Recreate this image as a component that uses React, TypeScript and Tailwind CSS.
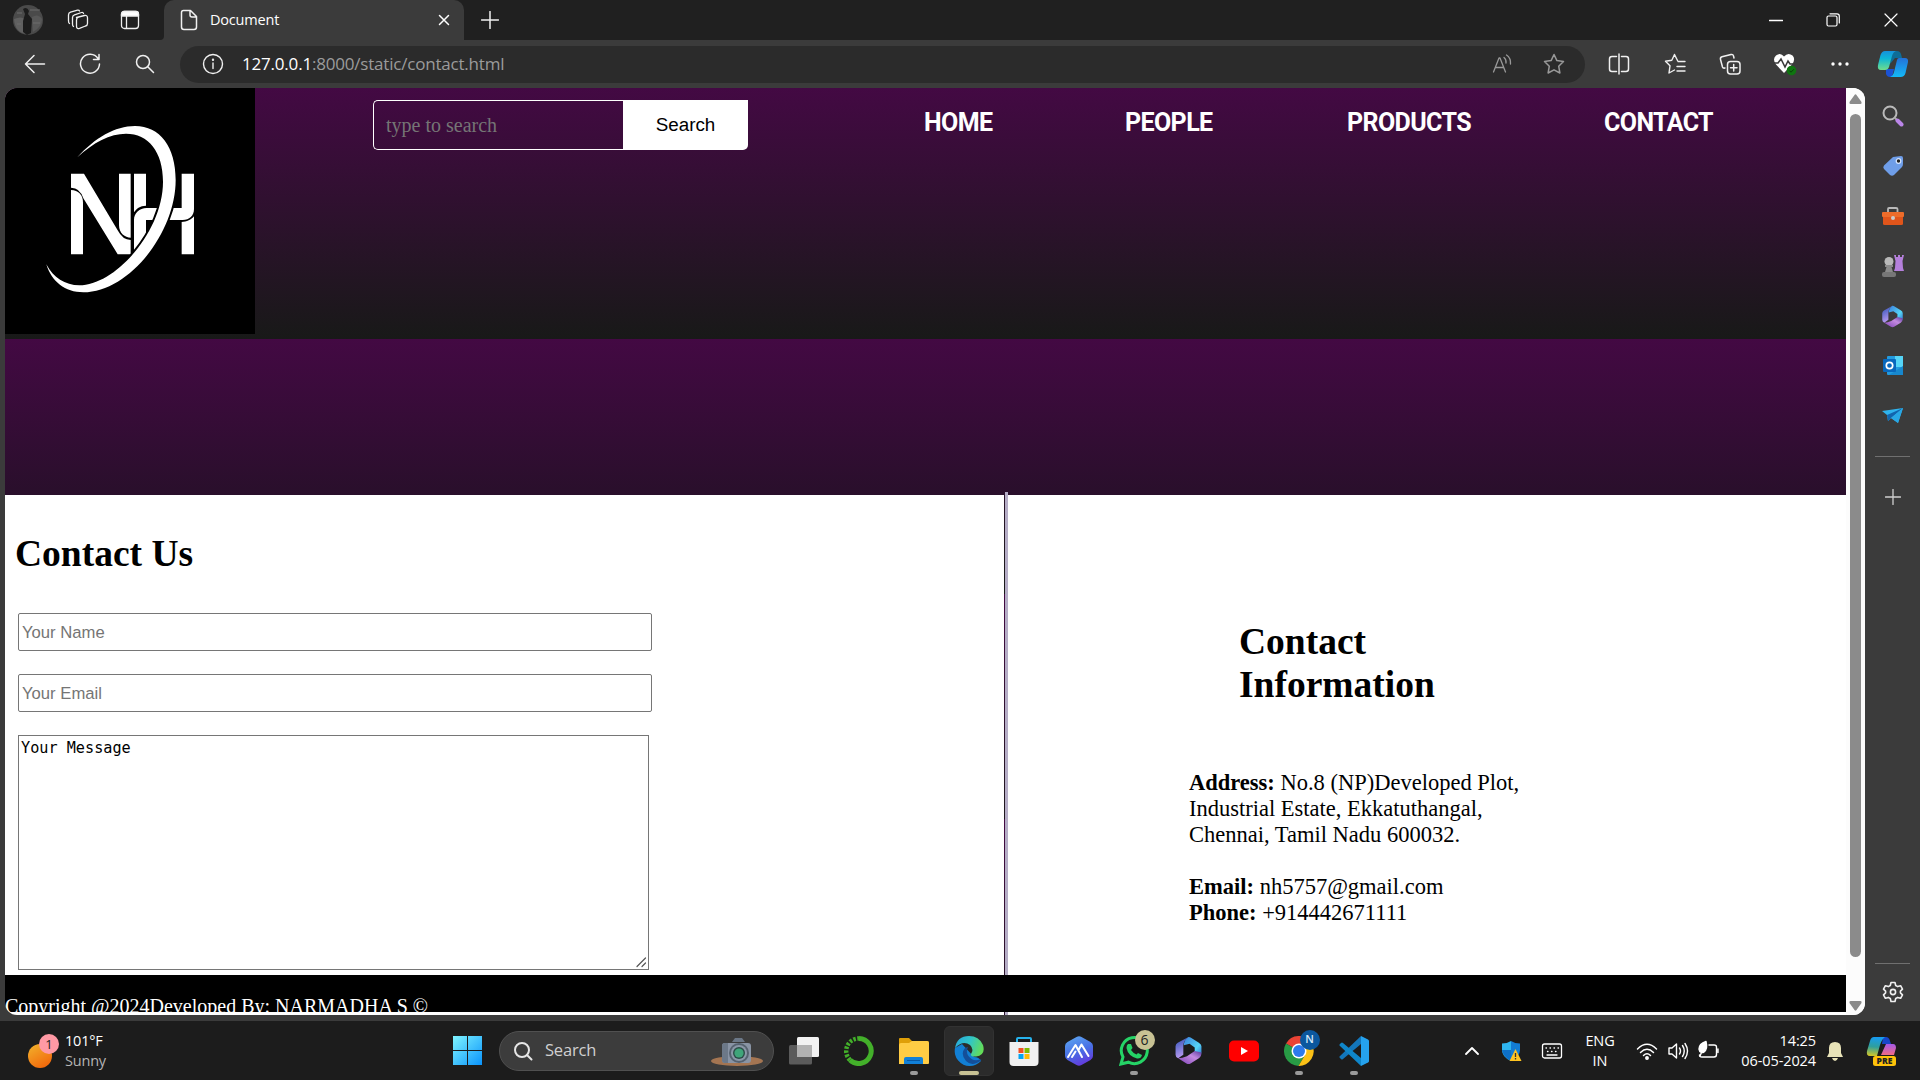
import type { ReactNode } from 'react';

const UI = "font-['Open_Sans','Noto_Sans',sans-serif]";
const SERIF = "font-['Liberation_Serif',serif]";

function Slot({ w, children, className = '' }: { w: string; children: ReactNode; className?: string }) {
  return <div className={`flex shrink-0 items-center justify-center ${w} ${className}`}>{children}</div>;
}

function Line({ size = 22, color = '#f0f0f0', sw = 1.3, children }: { size?: number; color?: string; sw?: number; children: ReactNode }) {
  return (
    <svg width={size} height={size} viewBox={`0 0 ${size} ${size}`} fill="none" stroke={color} strokeWidth={sw} strokeLinecap="round" strokeLinejoin="round" className="shrink-0">
      {children}
    </svg>
  );
}

function Microsoft365({ size, id }: { size: number; id: string }) {
  return (
    <svg width={size} height={size} viewBox="0 0 28 28" className="shrink-0">
      <defs>
        <linearGradient id={id + 'a'} x1="0" y1="0" x2="0.3" y2="1"><stop stopColor="#2b4fb5" /><stop offset="1" stopColor="#b79af0" /></linearGradient>
        <linearGradient id={id + 'b'} x1="0" y1="0" x2="1" y2="1"><stop stopColor="#3a7fdd" /><stop offset=".6" stopColor="#55d6f7" /><stop offset="1" stopColor="#2b58c5" /></linearGradient>
        <linearGradient id={id + 'c'} x1="0" y1="1" x2="1" y2="0"><stop stopColor="#7c3fb5" /><stop offset=".6" stopColor="#c48be0" /><stop offset="1" stopColor="#55389c" /></linearGradient>
      </defs>
      <path d="M14 1 3.6 6.6Q1.5 8 1.5 10V18Q1.5 20.500 4 21.500L9 18V9Q9 5 14 1Z" fill={`url(#${id}a)`} />
      <path d="M14 1Q9.500 4 9.500 9L15 7.500 20 11V16.500Q20 20 17.500 23L24 20Q26.500 18.500 26.500 16V10Q26.500 8 24 6.500L16 1.500Q15 .8 14 1Z" fill={`url(#${id}b)`} />
      <path d="M4 21.500 12 26.500Q14 27.500 16 26.500L24 21.500Q26.500 20 26.500 16L20 14.500 12.500 19.500Q8 21.500 4 21.500Z" fill={`url(#${id}c)`} />
    </svg>
  );
}

function Copilot() {
  return (
    <svg width="32" height="30" viewBox="0 0 32 30">
      <defs>
        <linearGradient id="cpa" x1="0" y1="0" x2="0" y2="1"><stop stopColor="#1691dc" /><stop offset=".4" stopColor="#0db6d6" /><stop offset="1" stopColor="#70dd8c" /></linearGradient>
        <linearGradient id="cpb" x1="0" y1="0" x2="0" y2="1"><stop stopColor="#2471d8" /><stop offset="1" stopColor="#13baf8" /></linearGradient>
      </defs>
      <path d="M15 2H20Q23 2 24 5L25 9H18L13 15Z" fill="#0e6d98" />
      <path d="M9 20H17L15 28H13Q10 28 9 25Z" fill="#1b52d4" />
      <path d="M8 2H19Q16 3 15 7L12 18Q11 21 8 21H4Q0 21 1 16L3.500 6Q5 2 8 2Z" fill="url(#cpa)" />
      <path d="M22 9H28Q31.500 9 31 13L28.500 24Q27.500 28 23.500 28H13Q16 27 17 23L20 11Q20.500 9 22 9Z" fill="url(#cpb)" />
    </svg>
  );
}

function TitleBar() {
  return (
    <header className="flex h-10 items-end bg-[#202020]">
      <Slot w="w-[55px]" className="h-10">
        <svg width="30" height="30" viewBox="0 0 30 30">
          <circle cx="15" cy="15" r="15" fill="#4a4a4a" />
          <path d="M1 14Q8 11 12 14L14 29Q2 28 1 14Z" fill="#606060" /><path d="M19 12Q25 8 29 14 29 22 20 27Z" fill="#585858" />
          <path d="M10 4Q14 1 16 6L15 9 19 14 18 28 14 30 10 27 10 16 12 9Z" fill="#1c1c1c" />
          <path d="M17 5H27M4 8H9M4 19H8M20 18H27" stroke="#6c6c6c" strokeWidth="1" />
        </svg>
      </Slot>
      <Slot w="w-[45px]" className="h-10">
        <Line size={22}>
          <path d="M9.500 8.500 17.500 6.500Q20.500 6 20.500 9V14.500Q20.500 16.500 18.500 17L12.500 19.300Q9.500 20.300 9.500 17V11Q9.500 9 11.500 8.200" />
          <path d="M6.500 17.500Q5.500 17 5.500 15V8.500Q5.500 6.500 7.500 5.800L14.500 3.500Q16 3 16.500 4.500M2.500 14.500Q1.500 14 1.500 12V6Q1.500 4 3.500 3.200L10.500 1.200Q12 .8 12.500 2" />
        </Line>
      </Slot>
      <Slot w="w-[60px]" className="h-10">
        <Line size={20}><rect x="1.500" y="1.500" width="17" height="17" rx="3" /><path d="M1.500 6V4Q1.500 1.500 4 1.500H16Q18.500 1.500 18.500 4V6Z" fill="#fff" /><path d="M6.500 6V18" /></Line>
      </Slot>
      <div className="flex h-10 w-[4px] items-end bg-[#3b3b3b]"><div className="h-10 w-[4px] rounded-br-lg bg-[#202020]" /></div>
      <div className="flex h-10 w-[300px] items-center rounded-t-[10px] bg-[#3b3b3b] pb-[1px]">
        <Slot w="w-[46px]" className="pl-1">
          <Line size={22} sw={1.5}><path d="M5.500 1.500H12.500L18.500 7.500V18Q18.500 20.500 16 20.500H6Q3.500 20.500 3.500 18V3.500Q3.500 1.500 5.500 1.500ZM12 2V6Q12 8 14 8H18" /></Line>
        </Slot>
        <span className={`grow text-[14.5px] tracking-[-0.2px] text-white ${UI}`}>Document</span>
        <Slot w="w-[40px]"><Line size={12} color="#fff" sw={1.5}><path d="M1.500 1.500 10.500 10.500M10.500 1.500 1.500 10.500" /></Line></Slot>
      </div>
      <Slot w="w-[52px]" className="h-10"><Line size={18} sw={1.5}><path d="M9 .5V17.500M.5 9H17.500" /></Line></Slot>
      <div className="grow" />
      <Slot w="w-[57px]" className="h-10"><Line size={14} color="#fff"><path d="M.5 7.500H13.500" /></Line></Slot>
      <Slot w="w-[58px]" className="h-10"><Line size={14} color="#fff" sw={1.2}><rect x="1" y="3" width="10" height="10" rx="1.500" /><path d="M4 .8H11Q13.300 .8 13.300 3V10" /></Line></Slot>
      <Slot w="w-[58px]" className="h-10"><Line size={14} color="#fff" sw={1.2}><path d="M1 1 13 13M13 1 1 13" /></Line></Slot>
    </header>
  );
}

function Toolbar() {
  return (
    <div className="flex h-12 items-center bg-[#3b3b3b] pt-[0px]">
      <Slot w="w-[70px]"><Line size={22} sw={1.5}><path d="M20.500 11H1.500M10 2.500 1.500 11 10 19.500" /></Line></Slot>
      <Slot w="w-[40px]"><Line size={22} sw={1.5}><path d="M19 5.500A9.500 9.500 0 1 0 20.500 11M20 1.500V6.500H14.500" /></Line></Slot>
      <Slot w="w-[70px]"><Line size={20} sw={1.5}><circle cx="8" cy="8" r="6.500" /><path d="M13 13 18.500 18.500" /></Line></Slot>
      <div className="flex h-[37px] w-[1405px] items-center rounded-full bg-[#2b2b2b]">
        <Slot w="w-[62px]" className="pl-[3px]"><Line size={22} sw={1.4}><circle cx="11" cy="11" r="9.500" /><path d="M11 10V15.500" /><circle cx="11" cy="6.800" r=".5" /></Line></Slot>
        <div className={`grow text-[17px] tracking-[-0.2px] text-[#9b9b9b] ${UI}`}><span className="text-white">127.0.0.1</span>:8000/static/contact.html</div>
        <Slot w="w-[52px]">
          <Line size={20} color="#999"><path d="M1.500 18 7 4H8L13.500 18M3.500 13.500H11.500M12 3.500Q14.500 5.500 14 9M14.500 1Q19 4 18.500 10" /></Line>
        </Slot>
        <Slot w="w-[57px]" className="pr-[6px]"><Line size={22} color="#999" sw={1.5}><path d="M11 1.500 13.900 7.600 20.500 8.500 15.700 13.200 16.900 20 11 16.800 5.100 20 6.300 13.200 1.500 8.500 8.100 7.600Z" /></Line></Slot>
      </div>
      <Slot w="w-[62px]" className="pl-[6px]"><Line size={22} sw={1.5}><path d="M8.500 3.500H4Q1.500 3.500 1.500 6V16Q1.500 18.500 4 18.500H8.500M13.500 3.500H18Q20.500 3.500 20.500 6V16Q20.500 18.500 18 18.500H13.500M11 1V21" /></Line></Slot>
      <Slot w="w-[56px]"><Line size={22} sw={1.4}><path d="M13.500 7.500 10.500 1.500 7.800 7.300 1.500 8.200 6 12.800 5 20 10.500 17M14 8.500H21M13 13.500H21M13 18H21" /></Line></Slot>
      <Slot w="w-[54px]"><Line size={22} sw={1.5}><rect x="8.500" y="8.500" width="12.500" height="12.500" rx="3" /><path d="M14.700 11.500V18M11.500 14.700H18M15 5 14.500 3Q14 1 12 1.500L3 3.800Q1 4.500 1.500 6.500L3.500 14Q4 15.500 6 15" /></Line></Slot>
      <Slot w="w-[56px]">
        <svg width="24" height="24" viewBox="0 0 24 24"><path d="M11 21 3 12.500Q-1 7 3 3.500 7.500 0 11 4.500 15 0 19.500 3.500 23 7 19 12.500Z" fill="#fff" /><path d="M0 11H5L8 7 12 15 15 9 17 12H22" stroke="#3b3b3b" strokeWidth="1.600" fill="none" /><circle cx="18.500" cy="18.500" r="4.800" fill="#0f7510" /><path d="m16.500 18.700 1.500 1.500 3-3" stroke="#0a3d0a" fill="none" /></svg>
      </Slot>
      <Slot w="w-[54px]"><svg width="18" height="4" fill="#fff"><circle cx="2" cy="2" r="1.700" /><circle cx="9" cy="2" r="1.700" /><circle cx="16" cy="2" r="1.700" /></svg></Slot>
      <Slot w="w-[51px]"><Copilot /></Slot>
    </div>
  );
}

function BrandLogo() {
  const ring = 'M232 217C285 158 345 123 405 123C480 123 527 185 527 285C527 445 385 622 250 622C195 622 155 590 139 538C160 578 195 601 238 601C345 601 489 440 489 290C489 200 445 146 378 146C330 146 280 172 232 217Z';
  return (
    <svg width="250" height="246" viewBox="15 9 750 738" className="shrink-0 bg-black" fill="#fff">
      <path d="M213 266H252L353 436Q368 465 392 465V508H353L250 340Q240 308 213 308Z" />
      <path d="M213 315C235 315 249 330 249 352V508H213Z" />
      <path d="M357 266H392V458C375 458 357 445 357 420Z" />
      <path d="M402 266H438V362C420 362 408 372 402 382Z" />
      <path d="M402 500V405C402 385 418 369 440 369H475L462 405H438V470Z" />
      <path d="M518 369H545V266H582V372C582 392 568 405 548 405H500Z" />
      <path d="M545 411C560 411 574 404 582 394V508H545Z" />
      <path d={ring} stroke="#000" strokeWidth="12" />
      <path d={ring} />
    </svg>
  );
}

function WebPage() {
  return (
    <main className="flex h-[927px] w-[1860px] overflow-hidden rounded-xl bg-white">
      <div className="flex w-[1841px] flex-col">
        <div className="flex h-[251px] shrink-0 items-start bg-[linear-gradient(180deg,#430943_0%,#181918_100%)]">
          <BrandLogo />
          <div className="ml-[118px] mt-3 flex h-[50px] w-[375px]">
            <div className={`flex w-[250px] items-center rounded-l-[5px] border border-r-0 border-white pl-3 text-[20px] text-[#757575] ${SERIF}`}>type to search</div>
            <div className="flex w-[125px] items-center justify-center rounded-br-[5px] bg-white font-['Liberation_Sans',sans-serif] text-[18.8px] text-black">Search</div>
          </div>
          <nav className="ml-[176px] mt-[20px] flex gap-[132px] font-['Roboto',sans-serif] text-[25px] leading-[30px] font-bold text-white">
            <a className="w-[69px] tracking-[-0.6px]">HOME</a>
            <a className="w-[90px] tracking-[-0.6px]">PEOPLE</a>
            <a className="w-[125px] tracking-[-0.6px]">PRODUCTS</a>
            <a className="w-[104px] tracking-[-0.6px]">CONTACT</a>
          </nav>
        </div>
        <div className="h-[156px] shrink-0 bg-[linear-gradient(180deg,#430943_0%,#290f2b_100%)]" />
        <div className="flex h-[480px] shrink-0">
          <section className="w-[999px] pl-[10px]">
            <h1 className={`pt-[37px] text-[37.5px] leading-[43px] font-bold text-black ${SERIF}`}>Contact Us</h1>
            <div className="mt-[38px] ml-[3px] flex flex-col gap-[23px] font-['Liberation_Sans',sans-serif] text-[16.67px] text-[#757575]">
              <div className="flex h-[38px] w-[634px] items-center rounded-[2px] border border-[#767676] pl-[3px]">Your Name</div>
              <div className="flex h-[38px] w-[634px] items-center rounded-[2px] border border-[#767676] pl-[3px]">Your Email</div>
              <div className="flex h-[235px] w-[631px] items-end justify-between border border-[#767676] pl-[2px] font-['DejaVu_Sans_Mono',monospace] text-[15.2px] leading-[20px] text-black">
                <span className="self-start pt-[2px]">Your Message</span>
                <Line size={13} color="#555" sw={1.2}><path d="M2 10.500 10.500 2M7 10.500 10.500 7" /></Line>
              </div>
            </div>
          </section>
          <div className="-mt-[3px] flex w-[4px]">
            <div className="mt-[3px] w-px bg-[repeating-linear-gradient(180deg,#430943_0px,#181918_255px)] bg-[position:0_-156px]" />
            <div className="w-[3px] bg-[#b5adc6]" />
          </div>
          <section className={`text-black ${SERIF}`}>
            <h1 className="ml-[231px] mt-[125px] text-[37.5px] leading-[43px] font-bold">Contact<br />Information</h1>
            <p className="mt-[64px] ml-[181px] text-[22.5px] leading-[26px] whitespace-nowrap">
              <b>Address:</b> No.8 (NP)Developed Plot,<br />Industrial Estate, Ekkatuthangal,<br />Chennai, Tamil Nadu 600032.<br /><br />
              <b>Email:</b> nh5757@gmail.com<br /><b>Phone:</b> +914442671111
            </p>
          </section>
        </div>
        <footer className={`h-[37px] shrink-0 overflow-hidden bg-black pt-[20px] text-[20px] leading-[23px] whitespace-nowrap text-white ${SERIF}`}>Copyright @2024Developed By: NARMADHA S ©</footer>
        <div className="flex h-[3px] shrink-0 pl-[999px]"><div className="w-px bg-[#2a122c]" /><div className="w-[3px] bg-[#b5adc6]" /></div>
      </div>
      <div className="flex w-[19px] flex-col items-center bg-[#fcfcfc] pr-px">
        <svg width="13" height="26" viewBox="0 0 13 26"><path d="M5.500 7Q6.500 5.500 7.500 7L12.500 14Q13 16 11.500 16H1.500Q0 16 .5 14Z" fill="#8b8b8b" /></svg>
        <div className="h-[843px] w-[11px] rounded-full bg-[#8b8b8b]" />
        <svg width="13" height="58" viewBox="0 0 13 58"><path d="M5.500 53Q6.500 54.500 7.500 53L12.500 46Q13 44 11.500 44H1.500Q0 44 .5 46Z" fill="#8b8b8b" /></svg>
      </div>
    </main>
  );
}

function Sidebar() {
  return (
    <aside className="flex w-[55px] flex-col items-center">
      <div className="flex h-[353px] flex-col pt-[3px]">
        <Slot w="w-[24px]" className="h-[50px]"><svg width="22" height="22" viewBox="0 0 22 22" fill="none"><circle cx="8" cy="8" r="6.500" stroke="#bababa" strokeWidth="2" /><path d="m12.500 12.500 2 2" stroke="#aaa" strokeWidth="2" /><path d="m15.500 15.500 4 4" stroke="#bb86e9" strokeWidth="4" strokeLinecap="round" /></svg></Slot>
        <Slot w="w-[24px]" className="h-[50px]"><svg width="22" height="22" viewBox="0 0 22 22"><path d="M11 2 19 1Q21 1 21 3V9Q21 11 19.500 12.500L12 20Q10 21.500 8 20L2 14Q.5 12 2 10.500Z" fill="#6f9ee9" /><circle cx="16.500" cy="6" r="2.300" fill="#222" stroke="#d7e6ff" strokeWidth="1.200" /></svg></Slot>
        <Slot w="w-[24px]" className="h-[50px]"><svg width="24" height="20" viewBox="0 0 24 20"><path d="M7 6V3Q7 2 8 2H15Q16.500 2 16.500 3V6" stroke="#b9b9b9" strokeWidth="1.800" fill="none" /><rect x="2" y="6" width="20" height="13" rx="1.500" fill="#e0551b" /><rect x="1" y="6" width="22" height="5" rx="1" fill="#ed6c2a" /><circle cx="12" cy="12" r="2" fill="#ccc" /></svg></Slot>
        <Slot w="w-[24px]" className="h-[50px]">
          <svg width="24" height="24" viewBox="0 0 24 24"><path d="M13 1H15V3H17V1H19V3H21V1H23L21.500 7 22 14 23 17H13L14 14 14.500 7Z" fill="#b580dc" /><circle cx="8" cy="7.500" r="4.500" fill="#b9b9b9" /><path d="M4 11H12V13H10.500L12 18H4L5.500 13H4Z" fill="#8b8b8b" /><rect x="1" y="18" width="14" height="5" rx="2" fill="#777" /></svg>
        </Slot>
        <Slot w="w-[24px]" className="h-[50px]"><Microsoft365 size={23} id="sm" /></Slot>
        <Slot w="w-[24px]" className="h-[50px]">
          <svg width="22" height="22" viewBox="0 0 22 22"><rect x="5" y="1" width="16" height="19" rx="1" fill="#239bdf" /><path d="M13 1H21V12H13Z" fill="#55d5f7" /><path d="M7 20 21 11V20Z" fill="#1788ce" /><rect x="1" y="4" width="13" height="13" rx="1" fill="#0868bd" /><circle cx="7.500" cy="10.500" r="3.200" fill="none" stroke="#fff" strokeWidth="1.700" /></svg>
        </Slot>
        <Slot w="w-[24px]" className="h-[50px]"><svg width="24" height="20" viewBox="0 0 24 20"><path d="M1 5 22 2 17 17 10 12 7 15 6 9Z" fill="#2fb3ed" /><path d="M6 9 22 2 10 12 7 15Z" fill="#1264ad" /><path d="M10 12 22 2 17 17Z" fill="#28a7e5" /></svg></Slot>
      </div>
      <div className="mt-[15px] h-px w-[35px] bg-[#707070]" />
      <div className="mt-[32px]"><Line size={16} color="#d0d0d0"><path d="M8 .5V15.500M.5 8H15.500" /></Line></div>
      <div className="grow" />
      <div className="h-px w-[35px] bg-[#707070]" />
      <div className="mt-[17px] mb-[18px]">
        <Line size={22} sw={1.600}><path d="M9 1.500H13L13.700 4.500 15.700 5.600 18.600 4.700 20.500 8.200 18.400 10.200V11.800L20.500 13.800 18.600 17.300 15.700 16.400 13.700 17.500 13 20.500H9L8.300 17.500 6.300 16.400 3.400 17.300 1.500 13.800 3.600 11.800V10.200L1.500 8.200 3.400 4.700 6.300 5.600 8.300 4.500Z" /><circle cx="11" cy="11" r="2.600" /></Line>
      </div>
    </aside>
  );
}

function AppTile({ children, mark }: { children: ReactNode; mark?: 'dot' | 'active' }) {
  return (
    <div className="flex w-[55px] shrink-0 flex-col items-center">
      <div className={mark === 'active' ? 'flex h-[50px] w-[50px] flex-col items-center rounded-md border border-[#323232] bg-[#2b2b2b]' : 'flex h-[50px] w-[50px] flex-col items-center border border-transparent'}>
        <div className="flex h-[43px] shrink-0 items-center justify-center pt-[5px]">{children}</div>
        {mark && <div className={mark === 'active' ? 'mt-[1px] h-1 w-5 shrink-0 rounded-full bg-[#c8c294]' : 'mt-[1px] h-1 w-2 shrink-0 rounded-full bg-[#9a9a9a]'} />}
      </div>
    </div>
  );
}

function Taskbar() {
  return (
    <div className={`flex h-[59px] items-center bg-[#1c1c1c] text-white ${UI}`}>
      <div className="flex w-[453px] items-center pl-[27px]">
        <svg width="33" height="36" viewBox="0 0 33 36">
          <defs><linearGradient id="sun" x1="0" y1="0" x2=".6" y2="1"><stop stopColor="#f2b42d" /><stop offset="1" stopColor="#f26a0c" /></linearGradient></defs>
          <circle cx="13" cy="23" r="12" fill="url(#sun)" /><circle cx="22" cy="11" r="10" fill="#ff99a4" />
          <text x="22" y="16" textAnchor="middle" fontSize="13" fill="#222" fontFamily="Open Sans">1</text>
        </svg>
        <div className="ml-[5px] text-[14.5px] leading-[20px] tracking-[-0.2px]"><div>101°F</div><div className="text-[#b5b5b5]">Sunny</div></div>
      </div>
      <svg width="29" height="29" viewBox="0 0 29 29">
        <defs><linearGradient id="win" x1="0" y1="0" x2="1" y2="1"><stop stopColor="#7ff5ff" /><stop offset="1" stopColor="#0a93fb" /></linearGradient></defs>
        <path d="M0 0H14V14H0ZM15 0H29V14H15ZM0 15H14V29H0ZM15 15H29V29H15Z" fill="url(#win)" />
      </svg>
      <div className="ml-[17px] flex h-10 w-[275px] items-center rounded-full border border-[#505050] bg-[#3c3c3c] pl-[13px]">
        <Line size={20} color="#e6e6e6" sw={2}><circle cx="9" cy="9" r="7" /><path d="M14 14 18.500 18.500" /></Line>
        <span className="ml-[12px] grow text-[16.5px] tracking-[-0.2px] text-[#d0d0d0]">Search</span>
        <svg width="54" height="32" viewBox="0 0 54 32" className="mr-[9px]">
          <ellipse cx="27" cy="26" rx="26" ry="5" fill="#a47552" />
          <path d="M22 7 25 3H32L35 7Z" fill="#6b7787" /><rect x="12" y="8" width="29" height="20" rx="3" fill="#8994a5" /><path d="M12 11Q12 8 15 8H18V28H15Q12 28 12 25Z" fill="#6c7888" />
          <circle cx="29" cy="18" r="10" fill="#566270" /><circle cx="29" cy="18" r="8" fill="#8b98a8" /><circle cx="29" cy="18" r="6" fill="#2c4c48" /><circle cx="29" cy="18" r="4.600" fill="#3fa57a" />
        </svg>
      </div>
      <div className="ml-[2px] flex">
        <AppTile><svg width="30" height="28" viewBox="0 0 30 28"><rect x="0" y="8" width="23" height="19.500" rx="1.500" fill="#5b5b5b" /><rect x="8" y="0" width="22" height="20" rx="1.500" fill="#f2f2f2" /><path d="M8 8H23V20H9Q8 20 8 19Z" fill="#b2b2b2" /></svg></AppTile>
        <AppTile><svg width="30" height="30" viewBox="0 0 30 30" fill="none" stroke="#43b02a"><path d="M15 2.500A12.500 12.500 0 1 1 6 24" strokeWidth="5" /><path d="M6 24A12.500 12.500 0 0 1 15 2.500" strokeWidth="4.500" strokeDasharray="2.500 1.500" /></svg></AppTile>
        <AppTile mark="dot"><svg width="30" height="28" viewBox="0 0 30 28"><path d="M0 2Q0 1 1 1H10L13 4H28Q30 4 30 6V12H0Z" fill="#df9f08" /><path d="M0 8Q0 6 2 6H10L13 4H28Q30 4 30 6V26Q30 27 29 27H0Z" fill="#ffcc44" /><path d="M5 27V22Q5 20 7 20H22Q24 20 24 22V27Z" fill="#1180d8" /><path d="M8 23.500H21" stroke="#0758a4" /></svg></AppTile>
        <AppTile mark="active">
          <svg width="30" height="30" viewBox="0 0 30 30">
            <defs><linearGradient id="edg" x1="0" y1=".2" x2="1" y2=".5"><stop stopColor="#27a9dc" /><stop offset=".5" stopColor="#31c5c7" /><stop offset="1" stopColor="#64dd58" /></linearGradient></defs>
            <path d="M1 12A15 15 0 0 0 16 30Q22 30 27 25 25 21 20 21L8 8Z" fill="#127fd4" />
            <path d="M1 12Q3 0 15 0 25 0 29 9 32 19 22 20.500 15 21 17.500 17 20 13 16 9 9 4 1 12Z" fill="url(#edg)" />
            <path d="M11 12Q6 18 12 25 18 31 27 24.500 28 23 26 23.500 19 26 14.500 20 11.500 16 14 11Z" fill="#144f99" />
          </svg>
        </AppTile>
        <AppTile><svg width="30" height="30" viewBox="0 0 30 30"><path d="M8 7V3Q8 2 9 2H21Q22 2 22 3V7" stroke="#26b2ec" strokeWidth="2" fill="none" /><path d="M.5 6H29.500V26Q29.500 30 25.500 30H4.500Q.5 30 .5 26Z" fill="#f0f0f0" /><path d="M9.500 12H14.500V17H9.500Z" fill="#f35022" /><path d="M15.500 12H20.500V17H15.500Z" fill="#7fba00" /><path d="M9.500 18H14.500V23H9.500Z" fill="#05a5f0" /><path d="M15.500 18H20.500V23H15.500Z" fill="#ffba08" /></svg></AppTile>
        <AppTile>
          <svg width="30" height="30" viewBox="0 0 30 30"><defs><linearGradient id="hex" x1=".3" y1="0" x2=".7" y2="1"><stop stopColor="#5ba2f0" /><stop offset=".5" stopColor="#486fe5" /><stop offset="1" stopColor="#6734dc" /></linearGradient></defs><path d="M12.500 1Q15 -.5 17.500 1L26.500 6Q29 7.500 29 10V20Q29 22.500 26.500 24L17.500 29Q15 30.500 12.500 29L3.500 24Q1 22.500 1 20V10Q1 7.500 3.500 6Z" fill="url(#hex)" /><path d="M4 21 11.500 9 18 21M14.500 14 17.500 8.500 24.500 20M8 21 11.500 15.500" stroke="#fff" strokeWidth="2" fill="none" strokeLinecap="round" strokeLinejoin="round" /></svg>
        </AppTile>
        <AppTile mark="dot">
          <div className="relative"><svg width="30" height="30" viewBox="0 0 30 30"><path d="M2 28 4 21A13 13 0 1 1 9.500 26.200Z" fill="none" stroke="#25d366" strokeWidth="3" /><path d="M9 8 12 8 13.500 12 12 14Q14 17 17.500 18.500L19 17 23 19Q22 23 18 22.500 9 20 7.500 12 7.500 9 9 8Z" fill="#25d366" /></svg><div className="absolute -top-[6px] left-[16px] flex h-5 w-5 items-center justify-center rounded-full bg-[#c8c294] text-[14px] text-[#222]">6</div></div>
        </AppTile>
        <AppTile><Microsoft365 size={29} id="tm" /></AppTile>
        <AppTile><svg width="30" height="22" viewBox="0 0 30 22"><rect width="30" height="21" y=".5" rx="5" fill="#f00" /><path d="M12 7V15L19 11Z" fill="#fff" /></svg></AppTile>
        <AppTile mark="dot">
          <div className="relative"><svg width="30" height="30" viewBox="0 0 30 30"><path d="M15 15 2 7.500A15 15 0 0 1 28 7.500L28 8H15Z" fill="#ea4335" /><path d="M15 15 2 7.500A15 15 0 0 0 14.500 30L21 19Z" fill="#289b45" /><path d="M15 8H28A15 15 0 0 1 14.500 30L21 19Z" fill="#fbc116" /><circle cx="15" cy="15" r="7.500" fill="#fff" /><circle cx="15" cy="15" r="6" fill="#2d7bed" /></svg><div className="absolute -top-[6px] left-[16px] flex h-5 w-5 items-center justify-center rounded-full bg-[#0b579e] text-[11px] font-semibold text-[#d5e8fa]">N</div></div>
        </AppTile>
        <AppTile mark="dot"><svg width="30" height="30" viewBox="0 0 30 30"><path d="M22 0 29 3.500Q30 4 30 5V25Q30 26 29 26.500L22 30Z" fill="#25a2ee" /><path d="M22 0V8L4 23Q3 24 2 23L.5 21.500Q0 20.700 1 20Z" fill="#1376bb" /><path d="M22 30V22L4 7Q3 6 2 7L.5 8.500Q0 9.300 1 10Z" fill="#0f86ca" /></svg></AppTile>
      </div>
      <div className="grow" />
      <Slot w="w-[40px]"><Line size={14} color="#fff" sw={1.8}><path d="M1 10 7 4 13 10" /></Line></Slot>
      <Slot w="w-[40px]"><svg width="22" height="22" viewBox="0 0 22 22"><path d="M10 1Q14 3.500 19 3.500V10Q19 17 10 21Z" fill="#127cd4" /><path d="M10 1Q6 3.500 1 3.500V10Q1 17 10 21Z" fill="#2eb5f0" /><path d="M1 10H10V21Q2 17 1 10Z" fill="#0d70c8" /><path d="M14.500 9 20.500 21H8.500Z" fill="#ffc420" /><path d="M14.500 13V17M14.500 18V19.500" stroke="#333" strokeWidth="1.300" /></svg></Slot>
      <Slot w="w-[40px]"><Line size={22} color="#fff"><rect x="1.500" y="4" width="19" height="14" rx="2" /><path d="M5 8H5.500M9 8H9.500M13 8H13.500M17 8H17.500M6.500 11.500H7M10.500 11.500H11M14.500 11.500H15M6 15H16" sw-hidden="" /></Line></Slot>
      <Slot w="w-[56px]" className="text-center text-[14.500px] leading-[20px] tracking-[-0.1px]">ENG<br />IN</Slot>
      <Slot w="w-[38px]"><Line size={22} color="#fff" sw={1.500}><path d="M1.500 9Q11 -.5 20.500 9M4.500 12.500Q11 6 17.500 12.500M7.500 15.500Q11 12 14.500 15.500" /><circle cx="11" cy="18" r="1.200" fill="#fff" /></Line></Slot>
      <Slot w="w-[24px]"><Line size={22} color="#fff" sw={1.400}><path d="M2 8H5L9.500 4V18L5 14H2ZM12.500 8Q14.500 11 12.500 14M15.500 5.500Q19 11 15.500 16.500M18 3.500Q23 11 18 18.500" /></Line></Slot>
      <Slot w="w-[36px]"><Line size={22} color="#fff" sw={1.400}><path d="M12 5H17Q19.500 5 19.500 7V14.500Q19.500 17 17 17H5Q2.500 17 2.500 15M21 9V12.500" /><path d="M9 1.500Q2 4 2 9 3 14 7 12 11 9 9 1.500ZM3 16 6 9" fill="#fff" /></Line></Slot>
      <div className="w-[90px] text-right text-[14.500px] leading-[20px] tracking-[-0.1px]">14:25<br />06-05-2024</div>
      <Slot w="w-[38px]"><svg width="18" height="20" viewBox="0 0 18 20"><path d="M9 1Q15 1 15 7V12L17 16H1L3 12V7Q3 1 9 1Z" fill="#e8e3b8" /><path d="M6 17H12Q11 20 9 20T6 17Z" fill="#e8e3b8" /></svg></Slot>
      <div className="flex w-[66px] justify-center pr-[12px]">
        <svg width="31" height="30" viewBox="0 0 31 30">
          <defs><linearGradient id="pra" x1=".3" y1="0" x2=".2" y2="1"><stop stopColor="#179bf0" /><stop offset=".5" stopColor="#2f9f9c" /><stop offset="1" stopColor="#d8c824" /></linearGradient><linearGradient id="prb" x1="0" y1="0" x2="0" y2="1"><stop stopColor="#a45ae8" /><stop offset="1" stopColor="#f26a85" /></linearGradient></defs>
          <path d="M17 1H20Q23 1 24 5L25 8H16Z" fill="#1746c8" /><path d="M8 1H19Q16 3 14 9L11 20H4Q0 20 1 15L4 5Q5 1 8 1Z" fill="url(#pra)" /><path d="M20 8H27Q30 8 30 12L28 19H15Z" fill="url(#prb)" />
          <rect x="7" y="20" width="23" height="10" rx="2.500" fill="#ffc20a" /><text x="18.500" y="28" fontSize="8.500" fontWeight="800" textAnchor="middle" fontFamily="Open Sans" fill="#222">PRE</text>
        </svg>
      </div>
    </div>
  );
}

export default function App() {
  return (
    <div className="flex h-[1080px] w-[1920px] flex-col overflow-hidden bg-[#3b3b3b]">
      <TitleBar />
      <Toolbar />
      <div className="flex h-[933px] shrink-0 pl-[5px]">
        <WebPage />
        <Sidebar />
      </div>
      <Taskbar />
    </div>
  );
}
